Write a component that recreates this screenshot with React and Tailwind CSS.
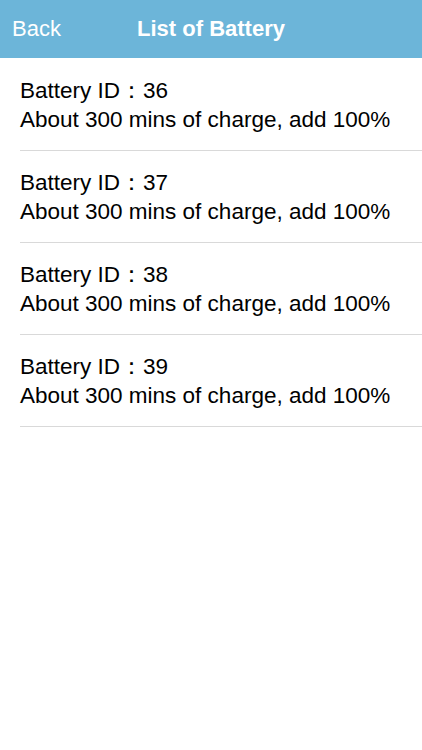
import React from "react";

const ids = [36, 37, 38, 39];

export default function App() {
  return (
    <div className="w-[422px] h-[750px] bg-white" style={{ fontFamily: '"Liberation Sans", Arial, sans-serif' }}>
      <div className="relative h-[58px] bg-[#6cb5d9] flex items-center justify-center text-white">
        <span className="absolute left-[12px] top-[14px] text-[22px] leading-[30px]">Back</span>
        <span className="text-[22px] font-semibold leading-[30px]">List of Battery</span>
      </div>
      <div className="pl-[20px] pt-px">
        {ids.map((id) => (
          <div key={id} className="h-[92px] border-b border-[#d9d9d9] flex flex-col justify-center text-[22.5px] leading-[29px] text-black">
            <div>Battery ID：{id}</div>
            <div>About 300 mins of charge, add 100%</div>
          </div>
        ))}
      </div>
    </div>
  );
}
